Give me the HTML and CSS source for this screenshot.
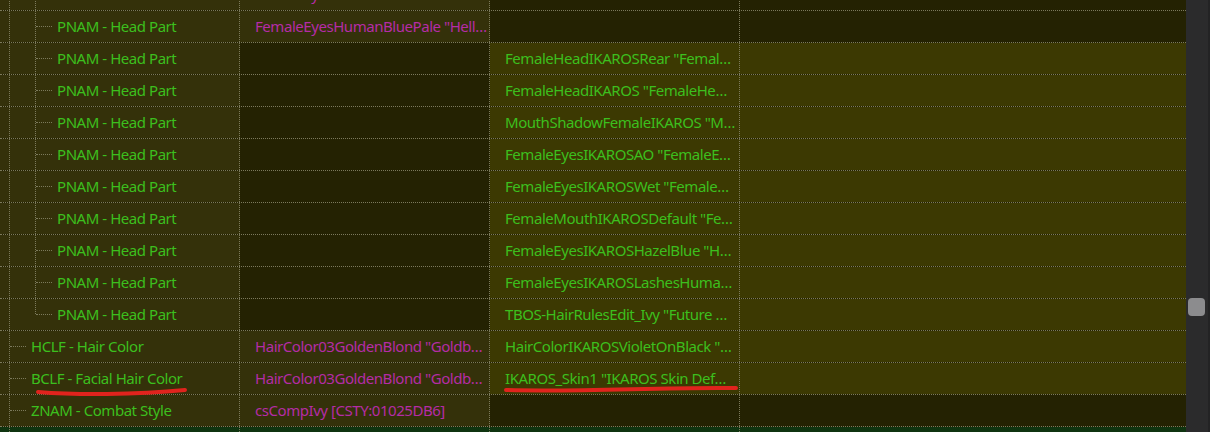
FILE: index.html
```html
<!DOCTYPE html>
<html lang="en">
<head>
    <meta charset="UTF-8">
    <meta name="viewport" content="width=device-width, initial-scale=1.0">
    <title>Record compare</title>
    <link rel="stylesheet" href="styles.css">
</head>
<body>
    <div class="view">
        <div class="records">
            <div class="row">
                <div class="cell label"><span class="guide"></span><span class="guide"></span></div>
                <div class="cell base ref">FemaleEyesHumanLashes "Hum…</div>
                <div class="cell dark"></div>
                <div class="cell dark"></div>
            </div>
            <div class="row">
                <div class="cell label"><span class="guide"></span><span class="guide elbow"></span><span class="name">PNAM - Head Part</span></div>
                <div class="cell base ref">FemaleEyesHumanBluePale "Hell…</div>
                <div class="cell dark"></div>
                <div class="cell dark"></div>
            </div>
            <div class="row">
                <div class="cell label"><span class="guide"></span><span class="guide elbow"></span><span class="name">PNAM - Head Part</span></div>
                <div class="cell dark"></div>
                <div class="cell hi val">FemaleHeadIKAROSRear "Femal…</div>
                <div class="cell hi"></div>
            </div>
            <div class="row">
                <div class="cell label"><span class="guide"></span><span class="guide elbow"></span><span class="name">PNAM - Head Part</span></div>
                <div class="cell dark"></div>
                <div class="cell hi val">FemaleHeadIKAROS "FemaleHe…</div>
                <div class="cell hi"></div>
            </div>
            <div class="row">
                <div class="cell label"><span class="guide"></span><span class="guide elbow"></span><span class="name">PNAM - Head Part</span></div>
                <div class="cell dark"></div>
                <div class="cell hi val">MouthShadowFemaleIKAROS "M…</div>
                <div class="cell hi"></div>
            </div>
            <div class="row">
                <div class="cell label"><span class="guide"></span><span class="guide elbow"></span><span class="name">PNAM - Head Part</span></div>
                <div class="cell dark"></div>
                <div class="cell hi val">FemaleEyesIKAROSAO "FemaleE…</div>
                <div class="cell hi"></div>
            </div>
            <div class="row">
                <div class="cell label"><span class="guide"></span><span class="guide elbow"></span><span class="name">PNAM - Head Part</span></div>
                <div class="cell dark"></div>
                <div class="cell hi val">FemaleEyesIKAROSWet "Female…</div>
                <div class="cell hi"></div>
            </div>
            <div class="row">
                <div class="cell label"><span class="guide"></span><span class="guide elbow"></span><span class="name">PNAM - Head Part</span></div>
                <div class="cell dark"></div>
                <div class="cell hi val">FemaleMouthIKAROSDefault "Fe…</div>
                <div class="cell hi"></div>
            </div>
            <div class="row">
                <div class="cell label"><span class="guide"></span><span class="guide elbow"></span><span class="name">PNAM - Head Part</span></div>
                <div class="cell dark"></div>
                <div class="cell hi val">FemaleEyesIKAROSHazelBlue "H…</div>
                <div class="cell hi"></div>
            </div>
            <div class="row">
                <div class="cell label"><span class="guide"></span><span class="guide elbow"></span><span class="name">PNAM - Head Part</span></div>
                <div class="cell dark"></div>
                <div class="cell hi val">FemaleEyesIKAROSLashesHuman…</div>
                <div class="cell hi"></div>
            </div>
            <div class="row">
                <div class="cell label"><span class="guide"></span><span class="guide elbow last"></span><span class="name">PNAM - Head Part</span></div>
                <div class="cell dark"></div>
                <div class="cell hi val">TBOS-HairRulesEdit_Ivy "Future …</div>
                <div class="cell hi"></div>
            </div>
            <div class="row">
                <div class="cell label"><span class="guide elbow"></span><span class="name">HCLF - Hair Color</span></div>
                <div class="cell base ref">HairColor03GoldenBlond "Goldb…</div>
                <div class="cell hi val">HairColorIKAROSVioletOnBlack "…</div>
                <div class="cell hi"></div>
            </div>
            <div class="row">
                <div class="cell label"><span class="guide elbow"></span><span class="name">BCLF - Facial Hair Color</span></div>
                <div class="cell base ref">HairColor03GoldenBlond "Goldb…</div>
                <div class="cell hi val">IKAROS_Skin1 "IKAROS Skin Def…</div>
                <div class="cell hi"></div>
            </div>
            <div class="row">
                <div class="cell label"><span class="guide elbow"></span><span class="name">ZNAM - Combat Style</span></div>
                <div class="cell base ref">csCompIvy [CSTY:01025DB6]</div>
                <div class="cell dark"></div>
                <div class="cell dark"></div>
            </div>
            <div class="row next">
                <div class="cell label"><span class="guide"></span></div>
                <div class="cell"></div>
                <div class="cell"></div>
                <div class="cell"></div>
            </div>
        </div>

        <!-- red pen marks -->
        <svg class="marks" width="1186" height="432" viewBox="0 0 1186 432">
            <path d="M38 392 C75 395 135 395 185 390" />
            <path d="M506 390 C585 392 660 387 736 388" />
        </svg>
    </div>

    <div class="scrollbar">
        <div class="thumb"></div>
    </div>
</body>
</html>
```

FILE: styles.css
```css
*{
    padding: 0;
    margin: 0;
    box-sizing: border-box;
}

body{
    display: flex;
    height: 432px;
    overflow: hidden;
    background-color: #222002;
    font-family: "Noto Sans", "Open Sans", sans-serif;
    font-size: 15px;
    letter-spacing: -0.45px;
}

.view{
    flex: 1;
    position: relative;
    overflow: hidden;
}

.records{
    margin-top: -21px;
}

/* ==================rows===================== */
.row{
    display: grid;
    grid-template-columns: 240px 250px 250px 1fr;
    height: 32px;
    border-bottom: 1px dotted #7c7a5c;
}

.row.next{
    background-color: #0f3410;
}

.cell{
    border-right: 1px dotted #7c7a5c;
    line-height: 31px;
    white-space: nowrap;
    overflow: hidden;
    text-overflow: ellipsis;
}

.cell:last-child{
    border-right: none;
}

.base{
    background-color: #34310a;
}

.hi{
    background-color: #3c3902;
}

.dark{
    background-color: #242202;
}

.ref{
    color: #b42ca6;
    padding: 0 1px 0 15px;
}

.val{
    color: #3cbf1e;
    padding: 0 0 0 15px;
}

/* ==================tree column===================== */
.label{
    display: flex;
    align-items: stretch;
    background-color: #34310a;
    color: #3cbf1e;
}

.row.next .label{
    background-color: transparent;
}

.guide{
    flex: none;
    display: flex;
    align-items: center;
    width: 26px;
    background: repeating-linear-gradient(to bottom, #7c7a5c 0 1px, transparent 1px 2px) 9px 0 / 1px 100% no-repeat;
}

.guide.last{
    background-size: 1px 50%;
}

.elbow::after{
    content: '';
    width: 16px;
    margin-left: 10px;
    border-top: 1px dotted #7c7a5c;
}

.name{
    padding-left: 5px;
}

/* ==================pen marks===================== */
.marks{
    position: absolute;
    top: 0;
    left: 0;
    pointer-events: none;
}

.marks path{
    fill: none;
    stroke: #e0231d;
    stroke-width: 4;
    stroke-linecap: round;
}

/* ==================scrollbar===================== */
.scrollbar{
    width: 24px;
    flex: none;
    background-color: #2b2b2c;
    border-right: 2px solid #232324;
    padding: 298px 3px 0 2px;
}

.thumb{
    height: 18px;
    border-radius: 4px;
    background-color: #8c8c8e;
}
```
